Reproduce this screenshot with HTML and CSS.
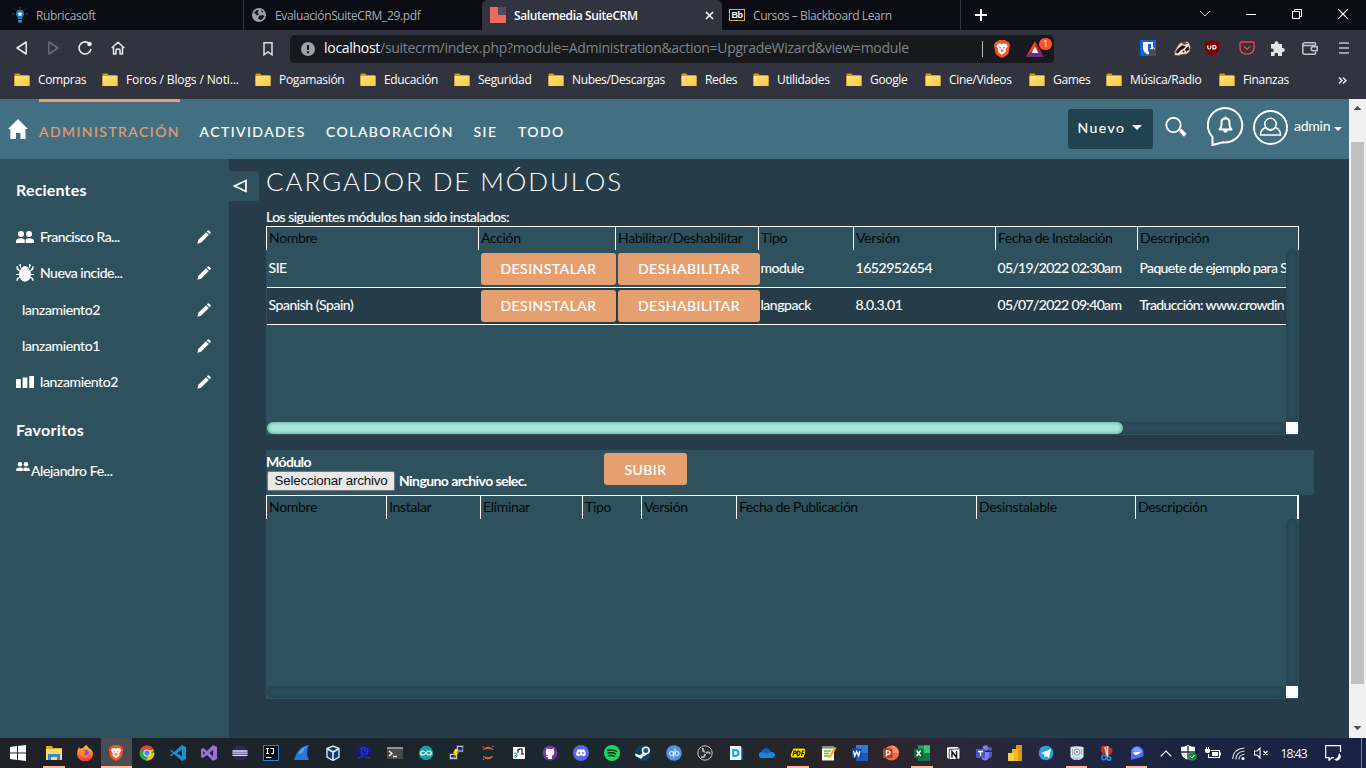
FILE: index.html
```html
<!DOCTYPE html>
<html lang="es">
<head>
<meta charset="utf-8">
<title>Salutemedia SuiteCRM</title>
<link rel="stylesheet" href="styles.css">
</head>
<body>
<svg width="0" height="0" class="defs" aria-hidden="true">
  <defs>
    <linearGradient id="gold" x2="1" y2="1"><stop offset="0" stop-color="#ffe37e"/><stop offset="1" stop-color="#fcc73e"/></linearGradient>
    <linearGradient id="fire" x2="0" y2="1"><stop offset="0" stop-color="#ffc52e"/><stop offset=".55" stop-color="#ff7a29"/><stop offset="1" stop-color="#f0244e"/></linearGradient>
    <symbol id="folder" viewBox="0 0 16 14"><path d="M.5 13V1.500Q.5.5 1.500.5H5.500l1 1.500h8q1 0 1 1V13z" fill="#d99b12"/><path d="M.5 3h15v9.500q0 .5-.5.500H1q-.5 0-.5-.5z" fill="url(#gold)"/></symbol>
    <symbol id="pencil" viewBox="0 0 14 14"><path d="M.3 13.700l.9-3.700L9 2.200l2.800 2.800L4 12.800zM9.800 1.400l1-1q.6-.5 1.200 0l1.600 1.600q.5.6 0 1.200l-1 1z" fill="#fff"/></symbol>
    <symbol id="people" viewBox="0 0 18 12"><g fill="#fff"><circle cx="5" cy="3" r="3"/><circle cx="13" cy="3" r="3"/><path d="M0 12V10Q.5 7.500 5 7.300q3 0 3.700 1.500V12zM9.500 12V8.800Q10.200 7.300 13 7.300q4.500.2 5 2.700v2z"/></g></symbol>
    <symbol id="lion" viewBox="0 0 16 18"><path d="M3 1.500L5 0h6l2 1.500 1.600.5L16 5l-1.500 8q-1 2.500-6.500 5-5.500-2.500-6.500-5L0 5l1.400-3z" fill="#fb542b"/><path d="M3.300 4L6 3.500l2 .7 2-.7 2.700.5.9 2.500-2 3 .3 2.200L8 14.800l-3.900-3.100.3-2.200-2-3z" fill="#fff"/><path d="M5 6.500l2 .8-.6 1.800zM11 6.500l-2 .8.600 1.800zM7 9.500h2l.5 1.500-1.500 1-1.500-1z" fill="#fb542b"/></symbol>
  </defs>
</svg>

<header class="browser">
  <div class="tabs">
    <div class="tab tab-first">
      <svg width="16" height="16" viewBox="0 0 16 16"><path d="M8 2.500a4 4 0 0 1 2.500 7.200L10 12H6l-.5-2.300A4 4 0 0 1 8 2.500z" fill="#1d78b8"/><path d="M8 4.500l.8 1.600 1.700.2-1.200 1.200.3 1.700L8 8.400l-1.600.8.3-1.700-1.200-1.200 1.700-.2z" fill="#fff"/><path d="M6 13h4v1.500L9 16H7l-1-1.500z" fill="#2584c4"/><path d="M8 0v1.500M2.500 1.500l1 1M13.500 1.500l-1 1M0 7h2M14 7h2" stroke="#2b5d86" stroke-width="1"/></svg>
      <span class="t-rub">Rubricasoft</span>
    </div>
    <div class="tab tab-pdf">
      <svg width="14" height="14" viewBox="0 0 14 14"><circle cx="7" cy="7" r="7" fill="#9ba0aa"/><path d="M2 4.500L5 2l2 .5L5.500 4.500 7 6 5 7.500 4 6.500zM7.500 7.500L11 7l1.500 1L10 11.500 8.500 12 6 10.500zM9 2l2.500 1.500L10 5z" fill="#111522"/></svg>
      <span class="t-pdf">EvaluaciónSuiteCRM_29.pdf</span>
    </div>
    <div class="tab tab-active">
      <svg width="16" height="16" viewBox="0 0 16 16"><path d="M0 0h8v8h8v8H0z" fill="#ee6a5a"/><path d="M8 0h8v8H8z" fill="#514a61"/></svg>
      <span class="t-sal">Salutemedia SuiteCRM</span>
      <svg class="tab-close" width="9" height="9" viewBox="0 0 9 9"><path d="M1 1l7 7M8 1L1 8" stroke="#fff" stroke-width="1.700"/></svg>
    </div>
    <div class="tab tab-bb">
      <span class="bb">Bb</span>
      <span class="t-bb">Cursos – Blackboard Learn</span>
    </div>
    <div class="tab-new"><svg width="12" height="12" viewBox="0 0 12 12"><path d="M6 0v12M0 6h12" stroke="#fff" stroke-width="2"/></svg></div>
    <div class="win-ctl">
      <svg width="12" height="8" viewBox="0 0 12 8"><path d="M1 1l5 5 5-5" fill="none" stroke="#ccc"/></svg>
      <svg width="10" height="10" viewBox="0 0 10 10"><path d="M0 5.500h10" stroke="#fff"/></svg>
      <svg width="10" height="10" viewBox="0 0 10 10"><path d="M.5 2.500h7v7h-7zM2.500 2.500v-2h7v7h-2" fill="none" stroke="#fff"/></svg>
      <svg width="10" height="10" viewBox="0 0 10 10"><path d="M0 0l10 10M10 0L0 10" stroke="#fff" stroke-width="1.200"/></svg>
    </div>
  </div>

  <div class="toolbar">
    <div class="nav-ctl">
      <svg width="12" height="14" viewBox="0 0 12 14"><path d="M10.200 1v12L1 7z" fill="none" stroke="#e8e8ea" stroke-width="1.500" stroke-linejoin="round"/></svg>
      <svg width="12" height="14" viewBox="0 0 12 14"><path d="M1.800 1v12L11 7z" fill="none" stroke="#686b78" stroke-width="1.500" stroke-linejoin="round"/></svg>
      <svg width="14" height="14" viewBox="0 0 14 14"><path d="M10.500 2A6 6 0 1 0 13 8" fill="none" stroke="#e8e8ea" stroke-width="1.600"/><circle cx="11.500" cy="3" r="2.300" fill="#e8e8ea"/></svg>
      <svg width="14" height="14" viewBox="0 0 14 14"><path d="M.7 7L7 1.200 13.300 7M2.500 6v7H5V9.500q0-1.500 2-1.500t2 1.500V13h2.500V6" fill="none" stroke="#e8e8ea" stroke-width="1.500" stroke-linejoin="round"/></svg>
    </div>
    <svg class="bookmark" width="10" height="14" viewBox="0 0 10 14"><path d="M1 .8h8v12L5 10l-4 2.800z" fill="none" stroke="#e0e0e4" stroke-width="1.500"/></svg>
    <div class="address">
      <svg width="14" height="14" viewBox="0 0 14 14"><circle cx="7" cy="7" r="7" fill="#9ba0aa"/><path d="M6 3h2v5H6zM6 9.200h2v2H6z" fill="#17191f"/></svg>
      <span class="url"><b>localhost</b>/suitecrm/index.php?module=Administration&amp;action=UpgradeWizard&amp;view=module</span>
      <i class="addr-sep"></i>
      <svg class="addr-lion" width="16" height="18"><use href="#lion"/></svg>
      <div class="bat">
        <svg width="18" height="16" viewBox="0 0 18 16"><path d="M9 0l3 10H6L0 16z" fill="#ff4724"/><path d="M9 0l9 16-6-5z" fill="#9e1f63"/><path d="M0 16l6-5h6l6 5z" fill="#662d91"/><path d="M9 6l3.500 6h-7z" fill="#fff"/></svg>
        <span class="bat-n">1</span>
      </div>
    </div>
    <div class="ext">
      <svg width="16" height="16" viewBox="0 0 16 16"><path d="M0 0h16v16H0z" fill="#175ddc"/><path d="M3 2h10v6q0 4-5 6.500Q3 12 3 8z" fill="#fff"/><path d="M8 4h3v4q0 2-3 4z" fill="#175ddc"/><path d="M9 9h7v7H9z" fill="#4d4d4d"/><path d="M10.800 9.500V8q1.700-2 3.400 0v1.500" fill="none" stroke="#ddd"/></svg>
      <svg width="17" height="15" viewBox="0 0 17 15"><path d="M.5 11L2.500 7l2-3 2.500-2.500 3 .5 3-1.500 2 1.500 1.500 4-1 4.500-3 2.500-5 .5-3 1-4-.5z" fill="#f4e8da" stroke="#7a5538" stroke-width=".8"/><path d="M1.500 11.500L4 8l4-3.500 3.500 1-2 2-3 1.500-2.500 3zM11.500 8l3-2.500.5 3-3 2zM8 2.500l3 .8 3-1.300" fill="#1b1714" stroke="#1b1714" stroke-width=".6"/><circle cx="9.500" cy="10.500" r="1" fill="#1b1714"/></svg>
      <svg width="14" height="16" viewBox="0 0 14 16"><path d="M7 0q3 2 7 2v6q0 5-7 8Q0 13 0 8V2q4 0 7-2z" fill="#800000"/><path d="M2.800 5.500v2q0 1.500 1.500 1.500T5.800 7.500v-2M8 5.700v3.100h1.500q1.500 0 1.500-1.600T9.500 5.700z" fill="none" stroke="#fff" stroke-width="1.200"/></svg>
      <svg width="16" height="14" viewBox="0 0 16 14"><path d="M2.300 1h11.400q1.300 0 1.300 1.300V6.500q0 6.500-7 6.500T1 6.500V2.300Q1 1 2.300 1z" fill="none" stroke="#ee4056" stroke-width="1.500"/><path d="M4.800 5.300L8 8.300l3.200-3" fill="none" stroke="#ee4056" stroke-width="1.500"/></svg>
      <svg width="15" height="15" viewBox="0 0 15 15"><path d="M1 3h3.500V2.200a2 2 0 0 1 4 0V3H12v4h.8a2 2 0 0 1 0 4H12v4H8v-1.500a1.700 1.700 0 0 0-3.400 0V15H1v-4h1a1.700 1.700 0 0 0 0-3.500H1z" fill="#e4e4e6"/></svg>
      <svg width="16" height="13" viewBox="0 0 16 13"><path d="M13.500 3.500V1.800q0-1-1-1H2.800q-2 0-2 2v7.400q0 2 2 2h9.700q1 0 1-1V10M1 3.500h12.500M15.200 4.800h-4a2 2 0 0 0 0 4h4z" fill="none" stroke="#c4c5ca" stroke-width="1.500"/></svg>
      <svg width="10" height="12" viewBox="0 0 10 12"><path d="M0 1h10M0 6h10M0 11h10" stroke="#c4c5ca" stroke-width="1.700"/></svg>
    </div>
  </div>

  <div class="marks">
    <span><svg><use href="#folder"/></svg>Compras</span>
    <span><svg><use href="#folder"/></svg><em class="wide">Foros / Blogs / Noti...</em></span>
    <span><svg><use href="#folder"/></svg>Pogamasión</span>
    <span><svg><use href="#folder"/></svg>Educación</span>
    <span><svg><use href="#folder"/></svg>Seguridad</span>
    <span><svg><use href="#folder"/></svg>Nubes/Descargas</span>
    <span><svg><use href="#folder"/></svg>Redes</span>
    <span><svg><use href="#folder"/></svg>Utilidades</span>
    <span><svg><use href="#folder"/></svg>Google</span>
    <span><svg><use href="#folder"/></svg>Cine/Videos</span>
    <span><svg><use href="#folder"/></svg>Games</span>
    <span><svg><use href="#folder"/></svg>Música/Radio</span>
    <span><svg><use href="#folder"/></svg>Finanzas</span>
    <svg class="more" viewBox="0 0 9 7"><path d="M1 .5l3 3-3 3M5 .5l3 3-3 3" fill="none" stroke="#e8e8ea" stroke-width="1.500"/></svg>
  </div>
</header>

<div class="viewport">
  <div class="app">
    <nav class="topnav">
      <svg class="home" width="20" height="20" viewBox="0 0 20 20"><path d="M10 0l10 10h-2.500v10h-5v-6H8v6H2.300V10H0z" fill="#fff"/></svg>
      <div class="menu">
        <a class="on">ADMINISTRACIÓN</a><a>ACTIVIDADES</a><a>COLABORACIÓN</a><a>SIE</a><a>TODO</a>
      </div>
      <button class="new">Nuevo<i class="caret"></i></button>
      <svg class="search" width="22" height="20" viewBox="0 0 22 20"><circle cx="8.500" cy="8" r="7.200" fill="none" stroke="#fff" stroke-width="1.800"/><path d="M14.500 13l2-1.300 5 5-2.500 3-4.500-4.700z" fill="#fff"/></svg>
      <svg class="bell" width="37" height="40" viewBox="0 0 37 40"><path d="M5.500 31A17.200 17.200 0 1 1 16 36.300L5.500 39z" fill="none" stroke="#fff" stroke-width="2"/><path d="M18.500 11.500v-1M12.500 23.500q2-2 2-5v-2q0-4 4-4t4 4v2q0 3 2 5z" fill="none" stroke="#fff" stroke-width="2" stroke-linejoin="round"/><path d="M16.500 24h4v1.500q-2 2.500-4 0z" fill="#fff"/></svg>
      <svg class="user" width="35" height="35" viewBox="0 0 35 35"><circle cx="17.500" cy="17.500" r="16.500" fill="none" stroke="#fff" stroke-width="1.900"/><circle cx="17.500" cy="14" r="5.700" fill="none" stroke="#fff" stroke-width="1.500"/><path d="M12.500 17.500q-5 2-5 7.500h20q0-5.500-5-7.500-5 6-10 0z" fill="none" stroke="#fff" stroke-width="1.400"/></svg>
      <span class="admin">admin</span><i class="caret small"></i>
    </nav>
    <div class="body">
      <aside>
        <h2>Recientes</h2>
        <div class="rec tight"><svg class="ri" width="18" height="12"><use href="#people"/></svg><span>Francisco Ra...</span><svg class="pen"><use href="#pencil"/></svg></div>
        <div class="rec tight"><svg class="ri" width="18" height="18" viewBox="0 0 18 18"><ellipse cx="9" cy="10.500" rx="6" ry="7.200" fill="#fff"/><path d="M5.500 4.500q3.500-4 7 0zM5 4L3.500 1 5 0M13 4l1.500-3L13 0M4 7L1 5.500V2M14 7l3-1.500V2M4 10.500H0M14 10.500h4M4 13l-3 1.500V17M14 13l3 1.500V17" fill="#fff" stroke="#fff"/></svg><span>Nueva incide...</span><svg class="pen"><use href="#pencil"/></svg></div>
        <div class="rec plain"><span>lanzamiento2</span><svg class="pen"><use href="#pencil"/></svg></div>
        <div class="rec plain"><span>lanzamiento1</span><svg class="pen"><use href="#pencil"/></svg></div>
        <div class="rec"><svg class="ri" width="18" height="12" viewBox="0 0 19 12" preserveAspectRatio="none"><path d="M0 3h5v9H0zM7 1.500h5V12H7zM14 0h5v12h-5z" fill="#fff"/></svg><span>lanzamiento2</span><svg class="pen"><use href="#pencil"/></svg></div>
        <h2 class="fav">Favoritos</h2>
        <div class="rec favrow"><svg width="14" height="9"><use href="#people"/></svg><span>Alejandro Fe...</span></div>
      </aside>
      <div class="toggle"><svg width="15" height="14" viewBox="0 0 15 14"><path d="M13 1.500v11L1.500 7z" fill="none" stroke="#fff" stroke-width="1.700"/></svg></div>
      <main>
        <h1>CARGADOR DE MÓDULOS</h1>
        <p class="lead">Los siguientes módulos han sido instalados:</p>
        <section class="grid g1">
          <div class="row head"><span>Nombre</span><span>Acción</span><span>Habilitar/Deshabilitar</span><span>Tipo</span><span>Versión</span><span>Fecha de Instalación</span><span>Descripción</span></div>
          <div class="scroll">
            <div class="rows">
              <div class="row"><span>SIE</span><span><button>DESINSTALAR</button></span><span><button>DESHABILITAR</button></span><span>module</span><span>1652952654</span><span class="date">05/19/2022 02:30am</span><span class="desc">Paquete de ejemplo para S</span></div>
              <div class="row dark"><span>Spanish (Spain)</span><span><button>DESINSTALAR</button></span><span><button>DESHABILITAR</button></span><span>langpack</span><span>8.0.3.01</span><span class="date">05/07/2022 09:40am</span><span class="desc">Traducción: www.crowdin</span></div>
            </div>
            <i class="track v"></i>
            <i class="track h"><i class="thumb"></i></i>
            <i class="corner"></i>
          </div>
        </section>
        <section class="upload">
          <div class="pick"><b>Módulo</b><div class="file"><span class="filebtn">Seleccionar archivo</span><b>Ninguno archivo selec.</b></div></div>
          <button>SUBIR</button>
        </section>
        <section class="grid g2">
          <div class="row head"><span>Nombre</span><span>Instalar</span><span>Eliminar</span><span>Tipo</span><span>Versión</span><span>Fecha de Publicación</span><span>Desinstalable</span><span>Descripción</span></div>
          <div class="scroll"><div class="rows"></div><i class="track v"></i><i class="track h"></i><i class="corner"></i></div>
        </section>
      </main>
    </div>
  </div>
  <div class="vbar"><svg width="9" height="5" viewBox="0 0 9 5"><path d="M.5 5L4.500.7 8.500 5z" fill="#505050"/></svg><i></i><svg width="9" height="5" viewBox="0 0 9 5"><path d="M.5 0l4 4.300L8.500 0z" fill="#505050"/></svg></div>
</div>

<footer class="taskbar">
  <div class="start"><svg width="16" height="16" viewBox="0 0 16 16"><path d="M0 2l7-1v6.500H0zM8 .9L16 0v7.500H8zM0 8.500h7V15l-7-1zM8 8.500h8V16l-8-1z" fill="#fff"/></svg></div>
  <div class="apps">
    <span class="open"><svg viewBox="0 0 16 16"><path d="M0 1h6l1 2h9v12H0z" fill="#e9a820"/><path d="M0 4h16v11H0z" fill="#ffd96a"/><path d="M2 15V9h12v6h-3v-3H5v3z" fill="#2e8bd8"/></svg></span>
    <span><svg viewBox="0 0 16 16"><path d="M8 1q2-1 2-1 0 2 2 3 4 2 4 6a7.500 7 0 0 1-16 0q0-4 2-7l1 2q1-1 3-1z" fill="url(#fire)"/><circle cx="8" cy="8.500" r="3.800" fill="#8b4bd8"/><path d="M3 6q4-2 6 1-2 1-2 3 3 1 5-2-1 6-6 4-3-2-3-6z" fill="#ff8a2a"/></svg></span>
    <span class="open active"><svg viewBox="0 0 16 18"><use href="#lion"/></svg></span>
    <span><svg viewBox="0 0 16 16"><circle cx="8" cy="8" r="7.500" fill="#2da94f"/><path d="M8 8L1.500 4.200A7.500 7.500 0 0 1 14.800 5H8z" fill="#e94235"/><path d="M8 8h7.500A7.500 7.500 0 0 1 7 15.500L10 10l4.800-5H8z" fill="#fdbd00"/><circle cx="8" cy="8" r="3.500" fill="#fff"/><circle cx="8" cy="8" r="2.700" fill="#4285f4"/></svg></span>
    <span><svg viewBox="0 0 16 16"><path d="M12 0l4 2v12l-4 2-8-7-3 2.500L0 10.500 3 8 0 5.500l1-1L4 7zM12 4.500L7 8l5 3.500z" fill="#1d8fd6"/></svg></span>
    <span><svg viewBox="0 0 16 16"><path d="M12 0l4 2v12l-4 2-6-6-4 3-2-1V4l2-1 4 3zM12 4.800L8.500 8l3.500 3.200zM2 6v4l2-2z" fill="#9a70d5" fill-rule="evenodd"/></svg></span>
    <span><svg viewBox="0 0 16 16"><circle cx="8" cy="8" r="7.500" fill="#30285c"/><path d="M.5 6h15M.3 8.200h15.400M.5 10.400h15" stroke="#e8e8f0" stroke-width="1.300"/></svg></span>
    <span><svg viewBox="0 0 16 16"><path d="M.5.5h15v15H.5z" fill="#050505" stroke="#1787ef"/><path d="M3 3.500h3M4.500 3.500v5M3 8.500h3M7.500 3.500h3v4q0 1.200-2 1M3 12.500h5.500" stroke="#fff" stroke-width="1.200" fill="none"/></svg></span>
    <span><svg viewBox="0 0 16 16"><path d="M0 15Q4 1 15 0q-4 8 0 15z" fill="#2477d4"/><path d="M4 9Q8 2 14 1q-4 2-6 7z" fill="#67a7ed"/></svg></span>
    <span><svg viewBox="0 0 16 16"><path d="M2 3.500L8 1l6 2.500v8.500l-6 3.500L2 12z" fill="#143a6b" stroke="#d8e2ef" stroke-width="1.400"/><path d="M2.500 4L8 7l5.500-3M8 7v8" stroke="#e4edf7" stroke-width="1.600" fill="none"/></svg></span>
    <span><svg viewBox="0 0 16 16"><path d="M8 0l3 1.500 3.500 1L16 6l-1.500 3.500L12 11l-3 .5L8.500 16l-1.500-4-4-.5L0 8l1.500-4L5 1.500z" fill="#141a8c"/><path d="M4 4q4-3 7 0 2 3-1 5-4 1-5-2 0-2.500 3-2.500 2 1 1 2.500M2 13l5-1.500M14 13l-5-1" fill="none" stroke="#343bd0" stroke-width="1.100"/></svg></span>
    <span><svg viewBox="0 0 16 16"><path d="M0 2h16v12H0z" fill="#4a4a4a"/><path d="M0 2h16v2H0z" fill="#929292"/><path d="M2 6l3 2.500L2 11M6 11.500h4" fill="none" stroke="#fff" stroke-width="1.400"/></svg></span>
    <span><svg viewBox="0 0 16 16"><circle cx="8" cy="8" r="7.200" fill="#17a2a2"/><path d="M8 8Q6.500 5.800 4.800 6a2 2 0 0 0 0 4Q6.500 10.200 8 8t3.200-2a2 2 0 0 1 0 4Q9.500 10.200 8 8z" fill="none" stroke="#fff" stroke-width="1.200"/></svg></span>
    <span><svg viewBox="0 0 16 16"><path d="M7.500.5h7v6.500h-7zM.5 8.500h8v6h-8z" fill="#ccc" stroke="#444"/><path d="M9 2h4.500v3.500H9zM2 10h5v2.500H2z" fill="#26268f"/><path d="M6 4h3.500L7.500 7.500H10L5 12l1.500-3.500H4z" fill="#ffe600"/></svg></span>
    <span><svg viewBox="0 0 16 16"><path d="M3 4.500Q8-.5 13 4.500Q8 2.500 3 4.500zM3 11.500q5 5 10 0q-5 2-10 0z" stroke="#f37726" stroke-width=".5" fill="#f37726"/><circle cx="3" cy="2" r=".7" fill="#999"/><circle cx="13" cy="1.500" r=".8" fill="#999"/><circle cx="3.500" cy="14.500" r=".8" fill="#999"/></svg></span>
    <span><svg viewBox="0 0 16 16"><path d="M2 2h12v12H2z" fill="#fff"/><path d="M7 7.500V4.500h1.500V4H11v5h2" stroke="#111" fill="none" stroke-width="1.200"/><path d="M3 8l2 .5 2-1M3 11.500l3-2M4.500 13L7 9.500" stroke="#238de0" fill="none"/></svg></span>
    <span><svg viewBox="0 0 16 16"><circle cx="8" cy="8" r="7.500" fill="#7431a0"/><path d="M6.200 14v-1.800q-1.800.3-2.500-1.500 1.500.8 2.600 0Q3.500 10 3.700 7q0-1.200.7-1.900L4.500 3l1.900.9q1.600-.4 3.200 0L11.500 3l.1 2.100q.7.7.7 1.900.2 3-2.600 3.700.3.500.3 1.500V14z" fill="#fff"/></svg></span>
    <span><svg viewBox="0 0 16 16"><circle cx="8" cy="8" r="8" fill="#5865f2"/><path d="M5 4l1.500.5h3L11 4q2 3 2 6l-2.500 1.500-.5-1H6l-.5 1L3 10q0-3 2-6z" fill="#fff"/><circle cx="6.200" cy="8" r="1" fill="#5865f2"/><circle cx="9.800" cy="8" r="1" fill="#5865f2"/></svg></span>
    <span><svg viewBox="0 0 16 16"><circle cx="8" cy="8" r="8" fill="#1ed760"/><path d="M3 5.500q5.500-1.500 10 1M3.500 8.300q5-1.300 8.500.8M4 10.800q4-1 7 .7" stroke="#102415" stroke-width="1.400" fill="none"/></svg></span>
    <span><svg viewBox="0 0 16 16"><circle cx="8" cy="8" r="8" fill="#123b66"/><circle cx="10.800" cy="5.500" r="3.300" fill="#28507c" stroke="#fff" stroke-width="1.600"/><path d="M0 8.500l5 1.700 3.500-3 3 2.500-3.500 2-2 2-2-1L.5 11z" fill="#fff"/></svg></span>
    <span><svg viewBox="0 0 16 16"><circle cx="8" cy="8" r="7.800" fill="#5594dd"/><circle cx="5.500" cy="8.500" r="2" fill="none" stroke="#e8f2ff"/><circle cx="11" cy="8.500" r="2" fill="none" stroke="#e8f2ff"/><path d="M7.500 6.500V12.500M9 3.500v7" stroke="#e8f2ff"/></svg></span>
    <span><svg viewBox="0 0 16 16"><circle cx="8" cy="8" r="7.200" fill="#292a2e" stroke="#c5c5c8"/><path d="M8 7q-3-1-2-4M9 8q3-2 4 1M8 9q0 4-4 3" stroke="#b5b5b9" stroke-width="1.800" fill="none"/></svg></span>
    <span><svg viewBox="0 0 16 16"><path d="M2 1h11v14H2z" fill="#f2f6fa"/><path d="M13 2l1.500 1v11L13 15z" fill="#2486df"/><path d="M5.200 5H7q3.500 0 3.500 3T7 11H5.200z" fill="none" stroke="#14a8ec" stroke-width="2"/></svg></span>
    <span><svg viewBox="0 0 16 16"><path d="M3 13a3 3 0 0 1-.5-6Q4 3 8 3.500q3 .5 4 3.500 4 0 4 3t-3 3z" fill="#1687df"/><path d="M2.500 7Q4 3 8 3.500q3 .5 4 3.500L8 9z" fill="#0b60bc"/></svg></span>
    <span class="open"><svg viewBox="0 0 16 16"><path d="M3 3h12l1 3-2 7H1L0 10z" fill="#f4e600" stroke="#171700"/><path d="M3 11l1-5h1.500q1.500 1 0 2.500H3.600M7 10.500L7.800 6q3 0 2 3Q9 11 7 10.500M11.500 11l1-5h2M12 8.500h2" stroke="#111" fill="none" stroke-width="1.200"/></svg></span>
    <span><svg viewBox="0 0 16 16"><path d="M1 1.500h12v14H1z" fill="#f7f7eb"/><path d="M1 1h12v2.500H1z" fill="#8a8a86"/><path d="M3 6h7M3 8.500h5M3 11h5" stroke="#6ebf31" stroke-width="1.700"/><path d="M8 11l5.500-9L15.500 3 10 12l-2.500 1.500z" fill="#f3ad20"/></svg></span>
    <span><svg viewBox="0 0 16 16"><path d="M4 0h12v16H4z" fill="#2b7cd3"/><path d="M4 8h12v8H4z" fill="#185abd"/><path d="M0 3.500h9.500v9.500H0z" fill="#1649a0"/><path d="M1.500 6l1.300 5L4.700 6.500 6.600 11l1.300-5" stroke="#fff" stroke-width="1.300" fill="none"/></svg></span>
    <span><svg viewBox="0 0 16 16"><circle cx="8.500" cy="8" r="7.500" fill="#ed6c47"/><path d="M8.500.5A7.500 7.500 0 0 1 16 8H8.500z" fill="#ff8f6b"/><path d="M0 3.500h9.500v9.500H0z" fill="#c43e1c"/><path d="M3.500 11.500V5.800h1.800q1.800.2 1.800 1.700T5.300 9.300H3.500" stroke="#fff" stroke-width="1.300" fill="none"/></svg></span>
    <span class="open"><svg viewBox="0 0 16 16"><path d="M4 .5h12v15H4z" fill="#21a366"/><path d="M4 8h12v7.500H4z" fill="#107c41"/><path d="M10 .5h6V8h-6z" fill="#33c481"/><path d="M0 3.500h9.500v9.500H0z" fill="#0e6b38"/><path d="M2.700 5.500l4 5.500M6.700 5.500l-4 5.500" stroke="#fff" stroke-width="1.500"/></svg></span>
    <span><svg viewBox="0 0 16 16"><path d="M1.500 2l10.500-.8 3 2V14l-11 .8-2.500-2.300z" fill="#fff" stroke="#222"/><path d="M4 4.500l10.500-.7M4.200 4.500v10" stroke="#222" stroke-width=".8"/><path d="M7 12.500V6.500l4.500 6V6" stroke="#151515" stroke-width="1.500" fill="none"/></svg></span>
    <span><svg viewBox="0 0 16 16"><circle cx="14" cy="4" r="2" fill="#5059c9"/><circle cx="9.500" cy="3" r="2.800" fill="#7b83eb"/><path d="M12 7h4v4q-1 3-4 2z" fill="#5059c9"/><path d="M5 7h8v5q-1 3.500-4 3.500T5 12z" fill="#7b83eb"/><path d="M0 4h9v9H0z" fill="#4b53bc"/><path d="M2 6.500h5M4.500 6.500V11" stroke="#fff" stroke-width="1.300"/></svg></span>
    <span><svg viewBox="0 0 16 16"><path d="M9 0h6v16H9z" fill="#d99a13"/><path d="M5 4h6v12H5z" fill="#f2b91d"/><path d="M1 8h6v8H1z" fill="#f6ce4b"/></svg></span>
    <span><svg viewBox="0 0 16 16"><circle cx="8" cy="8" r="7.300" fill="#28a0da"/><path d="M3 8l10-4-2 9-3-2-1.500 1.500L6 9.500z" fill="#fff"/></svg></span>
    <span class="open"><svg viewBox="0 0 16 16"><path d="M1.500 2Q8 .5 14.500 2v10q-3 4-6.500 2.500Q4 16 1.500 12z" fill="#dce5f1"/><circle cx="8" cy="7" r="3" fill="#fff" stroke="#8293ab"/><circle cx="8" cy="7" r="1" fill="#8293ab"/><path d="M3.500 4v6M12.500 4v6M4.500 13h7" stroke="#9fb0c8"/></svg></span>
    <span><svg viewBox="0 0 16 16"><path d="M2.500 1q8-1.500 11 3.500 0 5.500-4.500 6L8 8 4 9.500 2 6z" fill="#c83219"/><path d="M8.500 1v11M6 2l2 9" stroke="#dbe3e9" stroke-width="1.500"/><circle cx="5" cy="12.500" r="2.200" fill="none" stroke="#2296e4" stroke-width="1.400"/><circle cx="10" cy="13.500" r="1.800" fill="none" stroke="#2296e4" stroke-width="1.400"/></svg></span>
    <span class="open"><svg viewBox="0 0 16 16"><path d="M2 6q1-4 6-5 5 1 6.500 5v5L10 13l-5 1-3 1v-3z" fill="#536cf5"/><path d="M3 6q2-4 5-4 4 1 5 4l-5 1z" fill="#7f9dff"/><path d="M3.500 7.500L13 6.500 9.500 9l-3 1.200z" fill="#fff"/></svg></span>
  </div>
  <div class="tray">
    <svg width="12" height="7" viewBox="0 0 12 7"><path d="M.7 6.300L6 1l5.300 5.300" fill="none" stroke="#fff" stroke-width="1.200"/></svg>
    <svg width="16" height="16" viewBox="0 0 16 16"><path d="M7 0q3 2 7 2v5q0 5-7 8Q0 12 0 7V2q4 0 7-2z" fill="#fff"/><path d="M7 1v14M0 7h14" stroke="#222d3a" stroke-width="1.300"/><circle cx="11.500" cy="11.500" r="4.300" fill="#178843"/><path d="M9.500 11.500l1.500 1.500 2.500-3" stroke="#fff" fill="none"/></svg>
    <svg width="16" height="12" viewBox="0 0 16 12"><path d="M5.500 3.500h9v7H3.500V7M15.500 5.500v3" fill="none" stroke="#fff" stroke-width="1.100"/><path d="M7 5h6v4H7zM0 2h5v3L3.500 6h-2L0 5zM1 0h1v2H1zM3 0h1v2H3z" fill="#fff"/></svg>
    <svg width="13" height="13" viewBox="0 0 13 13"><path d="M.8 12Q1 2 12.500 1M3.800 12.500Q4 5 12.500 4M6.800 12.500Q7 8 12.500 7.200" fill="none" stroke="#d8dbe3" stroke-width="1.100"/><circle cx="11" cy="11.500" r="1.500" fill="#fff"/></svg>
    <svg width="15" height="12" viewBox="0 0 15 12"><path d="M.5 4v4H3l3 3V1L3 4zM9.500 4l4 4M13.500 4l-4 4" fill="none" stroke="#fff" stroke-width="1.100"/></svg>
    <time>18:43</time>
    <svg width="17" height="16" viewBox="0 0 17 16"><path d="M15.500 7V.7H.7v12H4v2.800l2.800-2.800H9" fill="none" stroke="#fff" stroke-width="1.200"/><path d="M14 8q3 3 1 6-3 3-6 .5 4-.5 5-6.500z" fill="#fff"/></svg>
    <i class="desk"></i>
  </div>
</footer>
</body>
</html>
```
FILE: styles.css
```css
* { box-sizing: border-box; }
html, body { margin: 0; height: 100%; overflow: hidden; }
body { width: 1366px; height: 768px; display: flex; flex-direction: column; font-family: Lato, sans-serif; font-size: 14px; color: #fff; background: #263d49; }
svg { display: block; flex: none; }
.defs { position: absolute; }
i, em { font-style: normal; }
button { font-family: inherit; border: 0; padding: 0; color: #fff; }

/* Browser chrome */
.browser { height: 99px; background: #31333f; font: 12px "Open Sans", sans-serif; letter-spacing: -.36px; white-space: nowrap; flex: none; }
.tabs { height: 30px; display: flex; background: #0b0b14; color: #a9abb1; }
.tab { display: flex; align-items: center; height: 30px; flex: none; }
.tab-first { width: 244px; padding-left: 12px; gap: 8px; border-right: 1px solid #33343d; }
.tab-pdf { width: 238px; padding-left: 8px; gap: 9px; }
.tab-active { width: 240px; background: #31333f; border-radius: 5px 5px 0 0; padding: 0 8px; color: #fff; font-weight: 600; }
.t-sal { margin-left: 8px; letter-spacing: -.37px; }
.tab-close { margin-left: auto; }
.tab-bb { width: 239px; padding-left: 7px; gap: 8px; border-right: 1px solid #33343d; }
.t-bb { letter-spacing: -.4px; }
.bb { width: 16px; height: 12px; border: 1px solid #d8a841; color: #fff; font: bold 9px/10px "Liberation Sans", sans-serif; text-align: center; letter-spacing: -.5px; }
.tab-new { width: 40px; display: flex; align-items: center; justify-content: center; }
.win-ctl { margin-left: auto; width: 183px; padding: 0 18px 2px 16px; display: flex; align-items: center; justify-content: space-between; }
.win-ctl svg:first-child { margin-right: -1px; }
.toolbar { height: 35px; display: flex; align-items: center; }
.nav-ctl { display: flex; width: 263px; padding: 1px 0 0 16px; gap: 19px; align-items: center; }
.bookmark { margin-right: 17px; margin-top: 2px; }
.address { width: 764px; height: 28px; margin-top: 2px; background: #17191f; border-radius: 5px; display: flex; align-items: center; padding-left: 11px; }
.url { width: 658px; margin-left: 9px; padding-bottom: 2px; font-size: 14px; letter-spacing: -.29px; color: #7f838b; }
.url b { color: #fff; font-weight: 400; }
.addr-sep { width: 1px; height: 16px; background: #b8b9bd; }
.addr-lion { margin-left: 11px; }
.bat { margin-left: 16px; position: relative; }
.bat-n { position: absolute; left: 13px; top: -3px; width: 13px; height: 12px; border-radius: 6px; background: #fb542b; font: 9px/12px "Open Sans", sans-serif; text-align: center; }
.ext { width: 218px; margin-left: 86px; padding-top: 1px; display: flex; align-items: center; justify-content: space-between; }
.ext svg:last-child { margin-right: 9px; }
.ext svg:nth-child(3) { margin-right: 2px; margin-left: -4px; }
.ext svg:nth-child(5) { margin-left: -4px; margin-right: 2px; }
.ext svg:nth-child(6) { margin-left: -3px; margin-right: 3px; }
.marks { height: 34px; padding: 0 0 4px 14px; display: grid; grid-template-columns: 88px 153px 105px 94px 94px 133px 72px 93px 79px 104px 77px 113px 119px 9px; align-items: center; letter-spacing: -.34px; line-height: 16px; }
.marks span { display: flex; align-items: center; gap: 8px; }
.marks span svg { width: 16px; height: 14px; }
.marks .wide { letter-spacing: -.13px; }
.marks .more { width: 9px; height: 7px; }

/* Application */
.viewport { height: 639px; display: flex; flex: none; }
.app { width: 1349px; }
.topnav { height: 60px; background: #436f82; display: flex; align-items: flex-start; }
.home { margin: 20px 11px 0 8px; }
.menu { width: 1029px; display: grid; grid-template-columns: 141px 107px 128px 25px 60px; column-gap: 19.500px; font-size: 14px; letter-spacing: 1.450px; line-height: 60px; white-space: nowrap; -webkit-text-stroke: .15px currentColor; }
.menu a { height: 60px; border-top: 3px solid transparent; }
.menu .on { color: #e59f6e; border-top-color: #e59f6e; }
.new { margin-top: 10px; width: 85px; height: 40px; border-radius: 3px; background: #21424f; font-size: 14px; letter-spacing: 1.450px; display: flex; align-items: center; justify-content: center; gap: 7px; padding: 0 1px 4px 0; -webkit-text-stroke: .15px #fff; }
.caret { border: 5px solid transparent; border-top-color: #fff; border-bottom: 0; }
.search { margin: 18px 0 0 12px; }
.bell { margin: 7px 0 0 20px; }
.user { margin: 11px 0 0 9px; }
.admin { margin: 18px 4px 0 6px; line-height: 18px; letter-spacing: -.25px; }
.small { border-width: 4px; border-bottom: 0; margin-top: 28px; }
.body { display: flex; height: 579px; }
aside { width: 229px; background: #2f515e; flex: none; }
h2 { margin: 0; height: 60px; padding: 2px 0 0 16px; font-size: 16px; line-height: 58px; letter-spacing: .18px; }
.fav { height: 52px; padding-top: 8px; line-height: 44px; letter-spacing: .3px; }
.rec { height: 36.300px; display: flex; align-items: center; padding: 0 18px 0 16px; letter-spacing: -.36px; }
.rec span { margin-top: -1px; -webkit-text-stroke: .12px #fff; }
.rec .ri + span { margin-left: 6px; }
.tight { letter-spacing: -.48px; }
.plain { padding-left: 22px; }
.pen { width: 14px; height: 14px; margin-left: auto; }
.favrow svg { margin-top: -8px; margin-right: 1px; }
.toggle { width: 30px; height: 30px; margin-top: 12px; background: #2f515e; border-radius: 0 3px 3px 0; display: flex; align-items: center; padding-left: 4px; flex: none; }
main { margin-left: 7px; width: 1048px; }
h1 { margin: 0 0 3px; height: 46px; line-height: 44px; font-size: 26px; font-weight: 300; letter-spacing: 1.900px; white-space: nowrap; }
.lead { margin: 0; height: 18px; line-height: 18px; letter-spacing: -.51px; -webkit-text-stroke: .15px #fff; }
.grid { width: 1033px; background: #2f515e; display: flex; flex-direction: column; padding-bottom: 1px; }
.g1 { height: 209px; }
.g2 { height: 204px; }
.row { display: grid; white-space: nowrap; }
.g1 .row { grid-template-columns: 212px 137px 143px 95px 142px 142px 162px; }
.g2 .row { grid-template-columns: 120px 94px 102px 59px 95px 240px 159px 164px; }
.head { height: 24px; border-top: 1px solid #fff; color: #030a0c; line-height: 22px; letter-spacing: -.33px; }
.head span { border-left: 1px solid #fff; padding-left: 2px; }
.head span:nth-child(6) { letter-spacing: -.5px; }
.head span:last-child { border-right: 1px solid #fff; }
.g2 .head span:last-child { border-right-width: 2px; }
.scroll { flex: 1; display: grid; grid-template: 1fr 12px / 1fr 12px; padding: 0 1px 0 1px; min-height: 0; }
.rows { overflow: hidden; min-width: 0; }
.rows .row { height: 38px; border-bottom: 1px solid #fff; line-height: 35px; padding: 0 0 0 1.500px; letter-spacing: -.45px; -webkit-text-stroke: .12px #fff; }
.rows .row + .row { height: 37px; line-height: 34px; }
.rows .row button { margin: 3px 0 0 .5px; line-height: 32px; vertical-align: top; }
.rows .row + .row button { margin-top: 2px; }
.rows .date { letter-spacing: -.66px; }
.rows .desc { letter-spacing: -.62px; }
.dark { background: #263d49; }
.grid button, .upload button { height: 32px; background: #e6a06f; border-radius: 3px; font-size: 14px; letter-spacing: .5px; -webkit-text-stroke: .22px #fff; }
.row span:nth-child(2) button { width: 135px; }
.row span:nth-child(3) button { width: 142px; }
.track { border-radius: 6px; background: #2d4c59; box-shadow: inset 0 0 5px rgba(20,43,53,.5); }
.h { display: block; }
.thumb { display: block; width: 856px; height: 12px; border-radius: 6px; background: #a6e9d7; box-shadow: inset 0 0 4px rgba(30,90,75,.6); }
.corner { background: #fff; }
.upload { height: 45px; margin-top: 15px; background: #2f515e; display: flex; }
.pick { width: 338px; padding-top: 3px; }
.pick b { display: block; font-size: 14px; line-height: 18px; letter-spacing: -.58px; }
.file { display: flex; gap: 4px; align-items: center; }
.filebtn { width: 128px; height: 20px; margin-left: 1px; border: 1px solid #777; border-radius: 2px; background: #e8e8e8; color: #111; font: 13.333px/18px "Liberation Sans", sans-serif; letter-spacing: -.17px; text-align: center; white-space: nowrap; }
.upload button { width: 83px; margin-top: 3px; }
.vbar { width: 17px; background: #f1f1f1; display: flex; flex-direction: column; align-items: center; padding-top: 6px; }
.vbar i { width: 13px; height: 542px; margin: 32px 0 42px; background: #c1c1c1; }

/* Taskbar */
.taskbar { height: 30px; flex: none; display: flex; background: linear-gradient(90deg,#202127 0,#1b232b 24%,#1b292f 45%,#2b2428 63%,#2b283a 70%,#1c2541 82%,#182344 100%); }
.start { width: 38.500px; padding: 7px 0 0 10px; }
.apps { display: grid; grid-template-columns: repeat(33,31px) 30px 30px 30px; }
.apps span { display: flex; align-items: center; justify-content: center; position: relative; }
.apps svg { width: 16px; height: 16px; }
.apps .open::after { content: ""; position: absolute; left: 4.500px; right: 4.500px; bottom: 0; height: 2px; background: #ffb69b; }
.apps .active { background: #4b4d53; }
.apps .active::after { left: 0; right: 0; }
.tray { flex: 1; display: flex; align-items: center; padding-left: 8px; }
.tray svg:nth-child(2) { margin-left: 9px; }
.tray svg:nth-child(3) { margin-left: 8px; }
.tray svg:nth-child(4) { margin-left: 11px; }
.tray svg:nth-child(5) { margin-left: 9px; }
time { width: 32px; margin-left: 12px; font: 12px "Open Sans", sans-serif; letter-spacing: -.85px; }
.tray svg:nth-child(7) { margin-left: 12px; }
.desk { width: 1px; height: 30px; background: #7a8194; margin-left: auto; margin-right: 4px; }
```
